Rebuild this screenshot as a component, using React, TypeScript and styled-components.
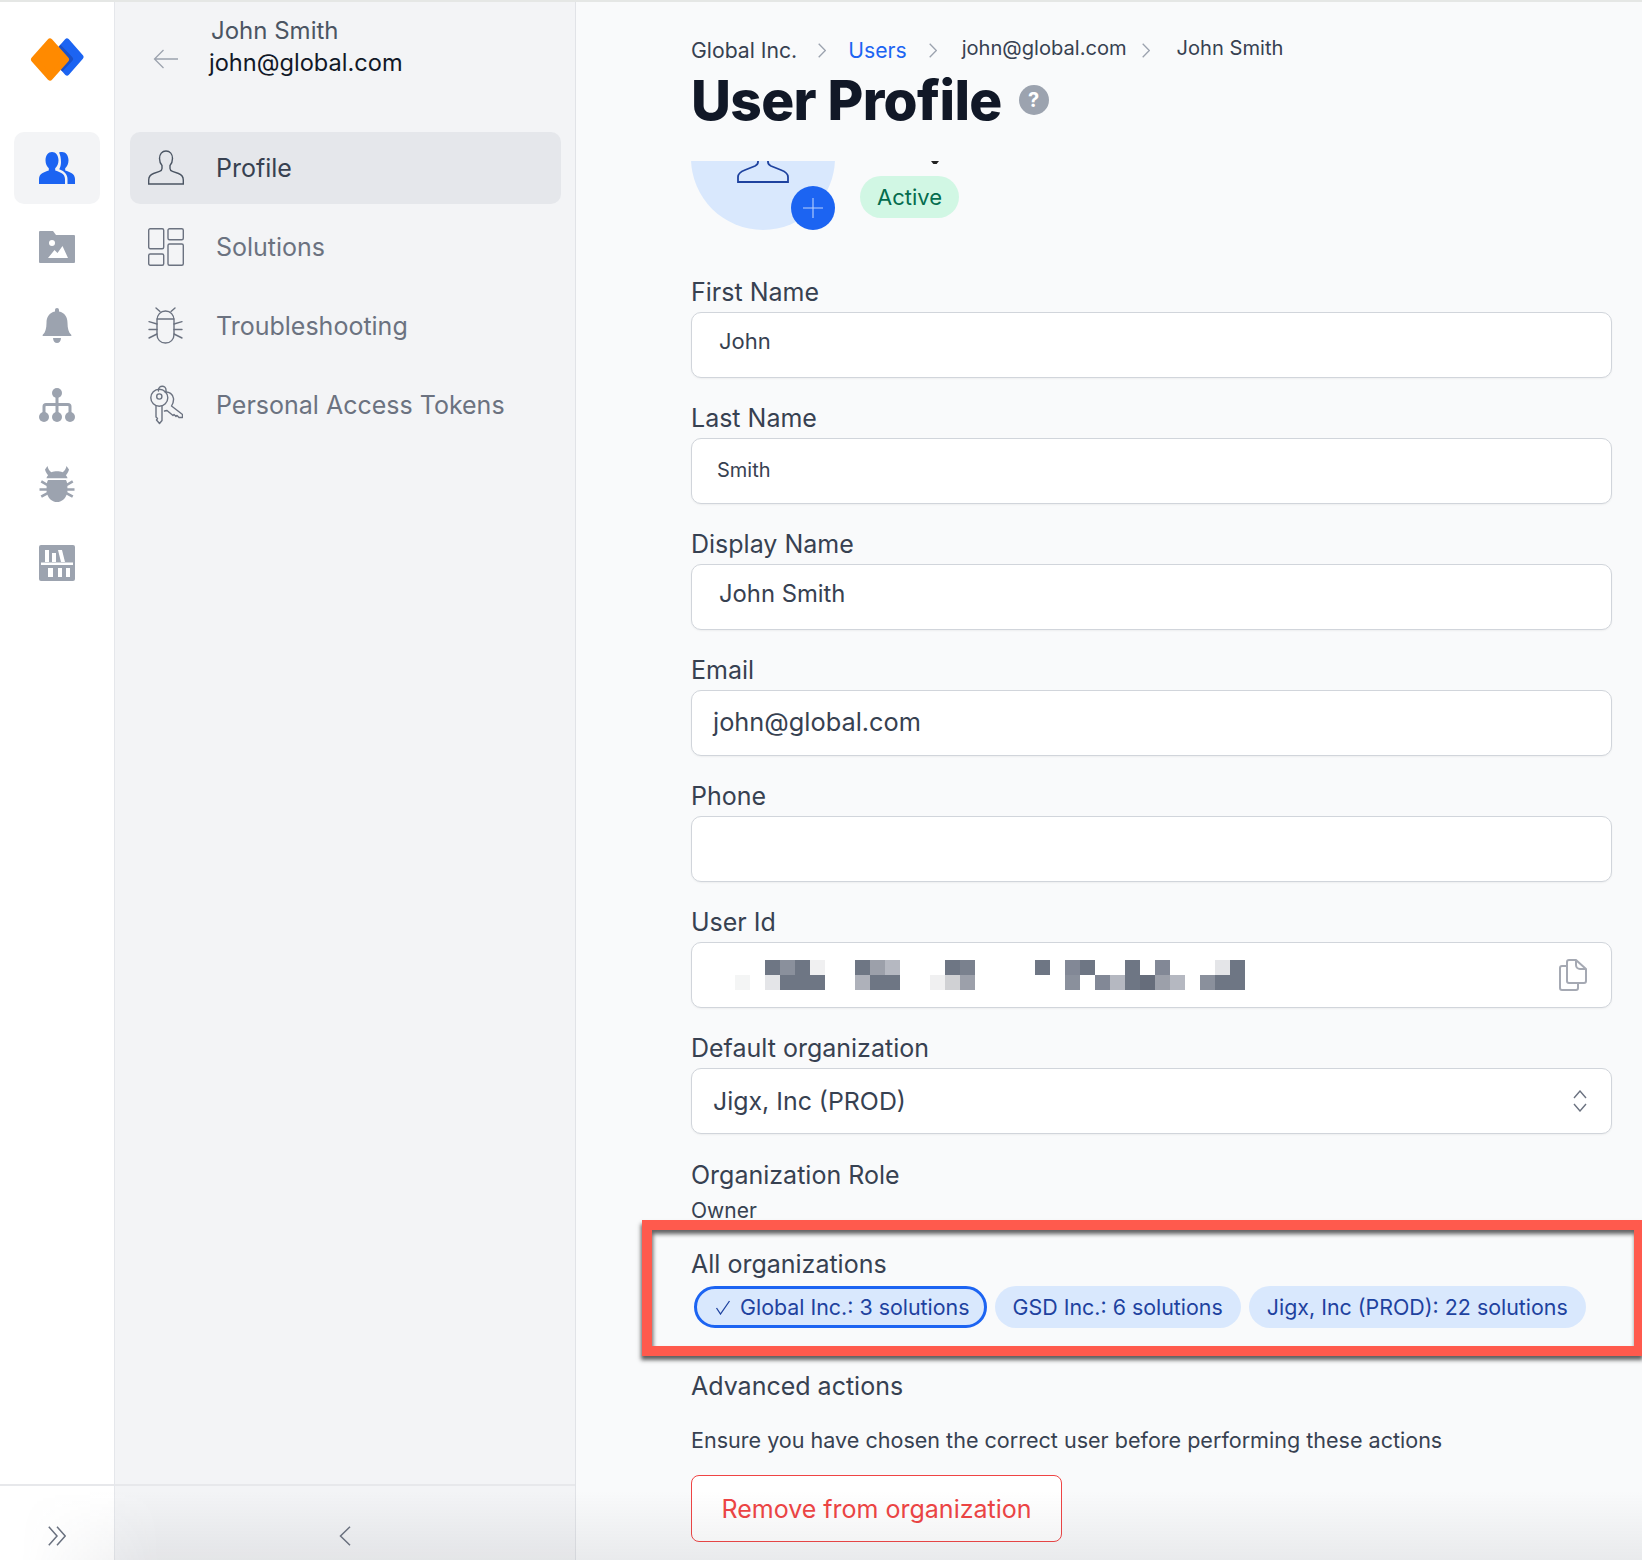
import React from "react";
import styled, { createGlobalStyle } from "styled-components";

const Global = createGlobalStyle`
  html, body { margin: 0; padding: 0; background: #f9fafb; }
  body { font-family: Inter, "Noto Sans", sans-serif; -webkit-font-smoothing: antialiased; }
  * { box-sizing: border-box; }
`;

const Page = styled.div`
  position: relative; width: 1642px; height: 1560px; overflow: hidden;
  display: flex; background: #f9fafb; border-top: 2px solid #e5e7e5;
`;
const BottomFade = styled.div`
  position: absolute; left: 0; right: 0; bottom: 0; height: 70px; pointer-events: none;
  background: linear-gradient(to bottom, rgba(80,85,95,0), rgba(80,85,95,0.09));
  mask-image: linear-gradient(to right, transparent 20px, #000 160px);
`;
const Rail = styled.nav`
  width: 115px; flex: none; background: #fff; border-right: 1px solid #e5e7eb;
  display: flex; flex-direction: column; align-items: center;
`;
const Logo = styled.svg`
  width: 54px; height: 45px; margin: 35px 0 50px; flex: none;
`;
const RailItem = styled.div<{ $active?: boolean }>`
  width: 86px; height: 72px; margin-bottom: 7px; border-radius: 10px; flex: none;
  display: flex; align-items: center; justify-content: center;
  background: ${p => (p.$active ? "#f3f4f6" : "transparent")};
  color: ${p => (p.$active ? "#1c64f2" : "#9ca3af")};
`;
const FootRow = styled.div`
  margin-top: auto; height: 76px; width: 100%; border-top: 2px solid #e7e8eb; flex: none;
  display: flex; align-items: center; justify-content: center; padding-top: 26px;
  color: #6b7280;
`;
const Panel = styled.aside`
  width: 461px; flex: none; background: #f3f4f6; border-right: 1px solid #e1e3e7;
  display: flex; flex-direction: column;
`;
const PanelHead = styled.header`
  height: 130px; flex: none; display: flex; align-items: flex-start; padding: 13px 0 0 38px;
`;
const BackArrow = styled.svg`
  width: 26px; height: 20px; margin: 34px 0 0 0; flex: none; color: #9ca3af;
`;
const HeadText = styled.div`display: flex; flex-direction: column; margin-left: 30px;`;
const HeadName = styled.div`font-size: 24px; line-height: 32px; color: #4b5563; margin-left: 2px;`;
const HeadMail = styled.div`font-size: 23.6px; line-height: 32px; color: #111827;`;
const PanelMenu = styled.div`display: flex; flex-direction: column; padding: 0 14px 0 15px;`;
const MenuItem = styled.div<{ $active?: boolean }>`
  height: 72px; margin-bottom: 7px; display: flex; align-items: center; padding-left: 18px; border-radius: 10px;
  background: ${p => (p.$active ? "#e5e7eb" : "transparent")};
  color: ${p => (p.$active ? "#374151" : "#6b7280")};
  font-size: 25px;
`;
const MenuIcon = styled.span`width: 36px; height: 40px; margin-right: 32px; display: flex; align-items: center; justify-content: center; color: #4b5563; flex: none;`;

const Main = styled.main`flex: 1; min-width: 0; padding-left: 115px; position: relative;`;
const Crumbs = styled.div`display: flex; height: 66px; padding-top: 31px; align-items: flex-start;`;
const Crumb = styled.span<{ $left?: number; $top?: number; $size: number; $blue?: boolean }>`
  margin-left: ${p => p.$left ?? 0}px; margin-top: ${p => p.$top ?? 0}px;
  font-size: ${p => p.$size}px; line-height: 28px; white-space: nowrap;
  color: ${p => (p.$blue ? "#1c64f2" : "#374151")};
`;
const CrumbChevron = styled.svg<{ $left: number }>`
  width: 8px; height: 15px; margin: 10px 0 0 ${p => p.$left}px; color: #9ca3af; flex: none;
`;
const TitleRow = styled.div`display: flex; align-items: center; height: 64px; margin-top: 0;`;
const Title = styled.h1`
  margin: 0; font-size: 55px; line-height: 62px; font-weight: 800; color: #111827; letter-spacing: -0.65px; white-space: nowrap;
`;
const Help = styled.span`
  width: 30px; height: 30px; margin-left: 17px; border-radius: 50%; background: #9ca3af; color: #fff;
  font-size: 20px; font-weight: 700; display: flex; align-items: center; justify-content: center;
`;
const Scroller = styled.div`
  height: 1399px; margin-top: 29px; overflow: hidden; margin-left: -60px; padding-left: 60px; margin-right: -30px; padding-right: 30px;
`;
const AvatarRow = styled.div`display: flex; margin-bottom: 46px; height: 69px;`;
const AvatarClip = styled.div`position: relative; width: 144px; height: 69px; flex: none; overflow: hidden;`;
const AvatarDisc = styled.div`
  position: absolute; left: 0; bottom: 0; width: 144px; height: 144px; border-radius: 50%; background: #d9e8fd;
  display: flex; justify-content: center; align-items: flex-end; color: #1e429f;
`;
const AvatarBody = styled.svg`width: 52px; height: 22px; margin-bottom: 47px;`;
const AddButton = styled.span`
  position: absolute; right: 0; bottom: 0; width: 44px; height: 44px; border-radius: 50%; background: #1c64f2;
  display: flex; align-items: center; justify-content: center; color: #b9d0fb;
`;
const StatusCol = styled.div`display: flex; flex-direction: column; margin-left: 25px; align-items: flex-start;`;
const Speck = styled.span`width: 8px; height: 3px; background: #222; margin: 0 0 12px 71px; clip-path: polygon(0 0,100% 0,70% 100%,30% 100%);`;
const Status = styled.span`
  height: 42px; padding: 0 17px; border-radius: 21px; background: #d1f7e4; color: #046c4e;
  font-size: 22px; display: flex; align-items: center;
`;
const Form = styled.div`display: flex; flex-direction: column; gap: 24px;`;
const Field = styled.div`display: flex; flex-direction: column; width: 921px;`;
const Label = styled.label`font-size: 25px; line-height: 33px; color: #374151; white-space: nowrap;`;
const InputBox = styled.div<{ $pad: number; $size: number; $lift?: number }>`
  height: 66px; margin-top: 3px; border: 1px solid #d1d5db; border-radius: 10px; background: #fff;
  box-shadow: 0 1px 2px rgba(0,0,0,.05);
  display: flex; align-items: center; justify-content: space-between;
  padding: 0 24px ${p => p.$lift ?? 0}px ${p => p.$pad}px; font-size: ${p => p.$size}px; color: #374151; white-space: nowrap;
`;
const Redacted = styled.svg`width: 510px; height: 30px; margin-left: 13px; display: block; flex: none;`;
const TrailIcon = styled.svg<{ $w: number; $h: number }>`width: ${p => p.$w}px; height: ${p => p.$h}px; flex: none; color: #a5a9b3;`;
const RoleBlock = styled.div`display: flex; flex-direction: column; margin-top: 1px;`;
const RoleValue = styled.div`font-size: 21px; line-height: 34px; padding-top: 2px; color: #374151;`;
const OrgSection = styled.section`position: relative; width: 921px; margin-top: -4px;`;
const Highlight = styled.div`
  position: absolute; top: -28px; bottom: -28px; left: -49px; right: -32px; border: 10px solid #ff5a4d; pointer-events: none;
  box-shadow: -1px 4px 4px rgba(30,30,30,.7), inset 1px 4px 4px rgba(30,30,30,.7);
`;
const Chips = styled.div`display: flex; gap: 8px; margin: 5px 0 0 3px;`;
const Chip = styled.span<{ $selected?: boolean }>`
  height: 42px; border-radius: 21px; background: #d9e8fd; color: #1e429f; font-size: 21.4px; white-space: nowrap;
  display: flex; align-items: center; padding: 0 18px;
  border: ${p => (p.$selected ? "3px solid #1c64f2" : "none")};
  ${p => p.$selected && "padding: 0 14px 0 18px;"}
`;
const ChipCheck = styled.svg`width: 16px; height: 16px; margin-right: 9px; color: #1e429f;`;
const Advanced = styled.div`margin-top: 18px; display: flex; flex-direction: column;`;
const Note = styled.p`margin: 22px 0 0; font-size: 21.55px; line-height: 30px; color: #374151; white-space: nowrap;`;
const Danger = styled.button`
  width: 371px; height: 67px; margin-top: 20px; border: 1px solid #ef4444; border-radius: 8px; background: #fff;
  color: #ef4444; font: 400 25px Inter, sans-serif; display: block; padding: 0;
`;

const Users = () => (
  <svg width="36" height="32" viewBox="0 0 36 32" fill="currentColor">
    <path d="M13 0c3.800 0 6.500 3.400 6.500 8.200 0 3.400-1.400 6.300-3.300 8v2.400c4.500 1.300 9.800 3.300 9.800 8.400V32H0v-5c0-5.100 5.300-7.100 9.800-8.400v-2.400c-1.900-1.700-3.300-4.600-3.300-8C6.500 3.400 9.200 0 13 0z" />
    <path d="M20 .4C21 .1 22 0 23 0c3.800 0 6.500 3.400 6.500 8.200 0 3.400-1.400 6.300-3.300 8v2.400C30.700 19.900 36 21.900 36 27v5h-7.500v-5c0-4.800-3.600-8.100-8.300-9.800 1.200-2 1.800-4.500 1.800-7 0-3.900-.7-7.300-2-9.800z" />
  </svg>
);
const FolderImage = () => (
  <svg width="36" height="32" viewBox="0 0 36 32">
    <path fill="currentColor" d="M1 0h13l3 4h18a1 1 0 0 1 1 1v26a1 1 0 0 1-1 1H1a1 1 0 0 1-1-1V1a1 1 0 0 1 1-1z" />
    <circle cx="13" cy="12" r="3" fill="#fff" />
    <path fill="#fff" d="M9 27l6.500-8 3 3 5-7 5.500 12z" />
  </svg>
);
const Bell = () => (
  <svg width="30" height="36" viewBox="0 0 30 36" fill="currentColor">
    <path d="M15 0c1.200 0 2 .9 2 2.200v1.300c5.700 1 8.500 5.600 8.500 11.500 0 5.500 1.200 9.500 3.500 11.500.6.500.8 1.500-.3 1.500H1.300c-1.100 0-.9-1-.3-1.500C3.300 24.500 4.500 20.500 4.500 15c0-5.900 2.800-10.500 8.500-11.500V2.200C13 .9 13.800 0 15 0z" />
    <path d="M11 30h8c0 3-1.800 5-4 5s-4-2-4-5z" />
  </svg>
);
const OrgTree = () => (
  <svg width="36" height="34" viewBox="0 0 36 34" fill="currentColor">
    <circle cx="18" cy="5" r="5" /><circle cx="5" cy="29" r="5" /><circle cx="18" cy="29" r="5" /><circle cx="31" cy="29" r="5" />
    <path d="M16.500 8h3v7H29a3.500 3.500 0 0 1 3.500 3.500V26h-3v-7.500a.5.500 0 0 0-.5-.5h-9.500v8h-3v-8H7a.5.500 0 0 0-.5.500V26h-3v-7.500A3.500 3.500 0 0 1 7 15h9.500z" />
  </svg>
);
const BugFill = () => (
  <svg width="36" height="36" viewBox="0 0 36 36" fill="currentColor">
    <path d="M6 3.500 8.500 0C9 3 10.500 5 12.500 6.200 14 5.600 16 5.200 18 5.200s4 .4 5.500 1C25.500 5 27 3 27.500 0L30 3.500C29.500 6 28 8 26.800 9.200c.8.700 1.400 1.400 1.700 3H7.500c.3-1.600.9-2.300 1.700-3C8 8 6.500 6 6 3.500z" />
    <path d="M9 14h18c.5 1 .9 2 1.100 3.200l5-3 1.300 2.200-6 3.600v2.200h7.100v2.500h-7.100v1.500l6 3.300-1.300 2.200-5.500-3C26 33 22.500 36 18 36s-8-3-9.600-7.300l-5.500 3-1.300-2.200 6-3.300v-1.500H.5v-2.500h7.100V20l-6-3.600 1.300-2.200 5 3c.2-1.200.6-2.200 1.100-3.200z" />
  </svg>
);
const Books = () => (
  <svg width="36" height="36" viewBox="0 0 36 36">
    <rect width="36" height="36" rx="2" fill="currentColor" />
    <path fill="#fff" d="M6 5h4v12H6zM13 8h4v9h-4zM19 5h4l3 12h-4z" />
    <path fill="#fff" d="M2 17.500h32V20H2z" />
    <path fill="#fff" d="M9 23h5v9H9zM19 23h4v9h-4zM27 23h4v9h-4z" />
  </svg>
);
const ProfileOutline = () => (
  <svg width="36" height="36" viewBox="0 0 36 36" fill="none" stroke="currentColor" strokeWidth="1.400">
    <path d="M18 1c4 0 6.500 3.200 6.500 7.500 0 3-1.200 5.500-2.500 7v3c0 1.500 1 2.300 2.500 2.800l6 2.200c3 1.100 4.800 3.500 4.800 6.500V34H.7v-4c0-3 1.800-5.400 4.800-6.500l6-2.200c1.500-.5 2.500-1.300 2.500-2.800v-3c-1.300-1.500-2.500-4-2.500-7C11.500 4.200 14 1 18 1z" />
  </svg>
);
const SolutionsOutline = () => (
  <svg width="36" height="38" viewBox="0 0 36 38" fill="none" stroke="#6b7280" strokeWidth="1.400">
    <rect x=".7" y=".7" width="15" height="20" rx="1.500" /><rect x="20" y=".7" width="15.300" height="11" rx="1.500" />
    <rect x=".7" y="26" width="15" height="11.300" rx="1.500" /><rect x="20" y="16" width="15.300" height="21.300" rx="1.500" />
  </svg>
);
const BugOutline = () => (
  <svg width="36" height="38" viewBox="0 0 36 38" fill="none" stroke="#6b7280" strokeWidth="1.400" strokeLinecap="round">
    <path d="M9 13c0-5 3.500-9 8.500-9s8.500 4 8.500 9v14.500c0 5-3.500 8.500-8.500 8.500S9 32.500 9 27.500z" />
    <path d="M9 12h17M12 4.500 8 1M23 4.500 27 1M9 17 1 14.700M26 17l8-2.300M9 22.500H1M26 22.500h8M9 27l-8 4M26 27l8 4" />
  </svg>
);
const KeysOutline = () => (
  <svg width="34" height="40" viewBox="0 0 34 40" fill="none" stroke="#6b7280" strokeWidth="1.400" strokeLinejoin="round" strokeLinecap="round">
    <path d="M9.500 6V5a3.700 3.700 0 0 1 7.500 0v2" />
    <circle cx="10.300" cy="12.800" r="8.500" /><circle cx="10.300" cy="11.500" r="2.600" />
    <path d="M7 21v11l1.500 1.500-1 1.500 3 3.500 2.500-3V21" />
    <path d="M16 7c4-.5 8 2 8.500 6.500.3 3-.8 5.500-2 7.500l11 8.500v3h-3.500l-2-2-1 1-2-2-1 1-6-5-2.500.5" />
  </svg>
);
const CopyIcon = () => (
  <TrailIcon $w={28} $h={32} viewBox="0 0 28 32" fill="none" stroke="currentColor" strokeWidth="2" strokeLinejoin="round">
    <path d="M8 7H3a2 2 0 0 0-2 2v20a2 2 0 0 0 2 2h14a2 2 0 0 0 2-2v-5" />
    <path d="M10 1h7l10 9v12a2 2 0 0 1-2 2H10a2 2 0 0 1-2-2V3a2 2 0 0 1 2-2z" />
    <path d="M17 1v5a4 4 0 0 0 4 4h6" />
  </TrailIcon>
);

const cells: [number, string | null, string | null][] = [
  [0, null, "#f4f5f5"], [2, "#6e7684", "#e4e5e8"], [3, "#8a909c", "#6e7684"], [4, "#6e7684", "#6e7684"], [5, "#f0f0f1", "#6e7684"],
  [8, "#6e7684", "#aeb1ba"], [9, "#9ca0aa", "#6e7684"], [10, "#b5b8c1", "#6e7684"],
  [13, null, "#f0f0f1"], [14, "#6e7684", "#d0d1d4"], [15, "#7a818e", "#9ca0aa"],
  [20, "#6e7684", null], [22, "#828896", "#8a909c"], [23, "#6e7684", null], [24, null, "#828896"], [25, null, "#b5b8c1"],
  [26, "#6e7684", "#6e7684"], [27, null, "#666d7b"], [28, "#828896", "#9ca0aa"], [29, null, "#b5b8c1"],
  [31, null, "#8a909c"], [32, "#e4e5e8", "#6e7684"], [33, "#6e7684", "#6e7684"],
];

const rows: { label: string; value: string; pad: number; size: number; lift?: number }[] = [
  { label: "First Name", value: "John", pad: 27, size: 22, lift: 9 },
  { label: "Last Name", value: "Smith", pad: 25, size: 20, lift: 3 },
  { label: "Display Name", value: "John Smith", pad: 27, size: 23.8, lift: 7 },
  { label: "Email", value: "john@global.com", pad: 21, size: 25.35, lift: 4 },
  { label: "Phone", value: "", pad: 21, size: 24 },
];

const Chevron = ({ left }: { left: number }) => (
  <CrumbChevron $left={left} viewBox="0 0 8 15" fill="none" stroke="currentColor" strokeWidth="1.300"><path d="M.7.7 7.300 7.500.7 14.300" /></CrumbChevron>
);

export default function App() {
  return (
    <>
      <Global />
      <Page>
        <Rail>
          <Logo viewBox="0 0 54 45">
            <defs>
              <clipPath id="logo-blue"><path d="M37 0 54 20 37 40 20 20z" /></clipPath>
            </defs>
            <path d="M37 4 51 20 37 36 23 20z" fill="#1c64f2" stroke="#1c64f2" strokeWidth="5" strokeLinejoin="round" />
            <path clipPath="url(#logo-blue)" d="M23 4 40 22 23 40 6 22z" fill="#1a50c8" stroke="#1a50c8" strokeWidth="6" strokeLinejoin="round" />
            <path d="M20 4.500 36 22.500 20 40.500 4 22.500z" fill="#ff8a00" stroke="#ff8a00" strokeWidth="6" strokeLinejoin="round" />
          </Logo>
          <RailItem $active><Users /></RailItem>
          <RailItem><FolderImage /></RailItem>
          <RailItem><Bell /></RailItem>
          <RailItem><OrgTree /></RailItem>
          <RailItem><BugFill /></RailItem>
          <RailItem><Books /></RailItem>
          <FootRow>
            <svg width="18" height="20" viewBox="0 0 18 20" fill="none" stroke="currentColor" strokeWidth="1.500"><path d="M.8.800 9 10 .8 19.200M9 .8 17.200 10 9 19.200" /></svg>
          </FootRow>
        </Rail>
        <Panel>
          <PanelHead>
            <BackArrow viewBox="0 0 26 20" fill="none" stroke="currentColor" strokeWidth="1.300"><path d="M25 10H1.500M10.500 1 1.500 10l9 9" /></BackArrow>
            <HeadText>
              <HeadName>John Smith</HeadName>
              <HeadMail>john@global.com</HeadMail>
            </HeadText>
          </PanelHead>
          <PanelMenu>
            <MenuItem $active><MenuIcon><ProfileOutline /></MenuIcon>Profile</MenuItem>
            <MenuItem><MenuIcon><SolutionsOutline /></MenuIcon>Solutions</MenuItem>
            <MenuItem><MenuIcon><BugOutline /></MenuIcon>Troubleshooting</MenuItem>
            <MenuItem><MenuIcon><KeysOutline /></MenuIcon>Personal Access Tokens</MenuItem>
          </PanelMenu>
          <FootRow>
            <svg width="12" height="20" viewBox="0 0 12 20" fill="none" stroke="currentColor" strokeWidth="1.500"><path d="M11 .8 1.500 10 11 19.200" /></svg>
          </FootRow>
        </Panel>
        <Main>
          <Crumbs>
            <Crumb $size={21.2} $top={3}>Global Inc.</Crumb>
            <Chevron left={21} />
            <Crumb $size={21.2} $left={22} $top={3} $blue>Users</Crumb>
            <Chevron left={22} />
            <Crumb $size={20.1} $left={25} $top={1}>john@global.com</Crumb>
            <Chevron left={15} />
            <Crumb $size={20.1} $left={27} $top={1}>John Smith</Crumb>
          </Crumbs>
          <TitleRow>
            <Title>User Profile</Title>
            <Help>?</Help>
          </TitleRow>
          <Scroller>
            <AvatarRow>
              <AvatarClip>
                <AvatarDisc>
                  <AvatarBody viewBox="0 0 52 22" fill="none" stroke="currentColor" strokeWidth="1.800">
                    <path d="M21 0v1c0 2-1 3-3 4L8 9c-4 1.500-7 3.500-7 7v5h50v-5c0-3.500-3-5.500-7-7L34 5c-2-1-3-2-3-4V0" />
                  </AvatarBody>
                </AvatarDisc>
                <AddButton>
                  <svg width="22" height="22" viewBox="0 0 22 22" stroke="currentColor" strokeWidth="1.100"><path d="M11 1v20M1 11h20" /></svg>
                </AddButton>
              </AvatarClip>
              <StatusCol>
                <Speck />
                <Status>Active</Status>
              </StatusCol>
            </AvatarRow>
            <Form>
              {rows.map(r => (
                <Field key={r.label}>
                  <Label>{r.label}</Label>
                  <InputBox $pad={r.pad} $size={r.size} $lift={r.lift}>{r.value}</InputBox>
                </Field>
              ))}
              <Field>
                <Label>User Id</Label>
                <InputBox $pad={30} $size={24}>
                  <Redacted viewBox="0 0 510 30" shapeRendering="crispEdges">
                    {cells.map(([c, top, bottom]) => (
                      <React.Fragment key={c}>
                        {top && <rect x={c * 15} y={0} width={15} height={15} fill={top} />}
                        {bottom && <rect x={c * 15} y={15} width={15} height={15} fill={bottom} />}
                      </React.Fragment>
                    ))}
                  </Redacted>
                  <CopyIcon />
                </InputBox>
              </Field>
              <Field>
                <Label>Default organization</Label>
                <InputBox $pad={21} $size={24.9} $lift={0}>
                  Jigx, Inc (PROD)
                  <TrailIcon $w={14} $h={22} viewBox="0 0 14 22" fill="none" stroke="#6b7280" strokeWidth="1.400"><path d="M1 8l6-7 6 7M1 14l6 7 6-7" /></TrailIcon>
                </InputBox>
              </Field>
              <RoleBlock>
                <Label>Organization Role</Label>
                <RoleValue>Owner</RoleValue>
              </RoleBlock>
              <OrgSection>
                <Label>All organizations</Label>
                <Chips>
                  <Chip $selected>
                    <ChipCheck viewBox="0 0 16 16" fill="none" stroke="currentColor" strokeWidth="1.300"><path d="M1.500 9l4 6L14.500 2" /></ChipCheck>
                    Global Inc.: 3 solutions
                  </Chip>
                  <Chip>GSD Inc.: 6 solutions</Chip>
                  <Chip>Jigx, Inc (PROD): 22 solutions</Chip>
                </Chips>
                <Highlight />
              </OrgSection>
              <Advanced>
                <Label>Advanced actions</Label>
                <Note>Ensure you have chosen the correct user before performing these actions</Note>
                <Danger>Remove from organization</Danger>
              </Advanced>
            </Form>
          </Scroller>
        </Main>
        <BottomFade />
      </Page>
    </>
  );
}
